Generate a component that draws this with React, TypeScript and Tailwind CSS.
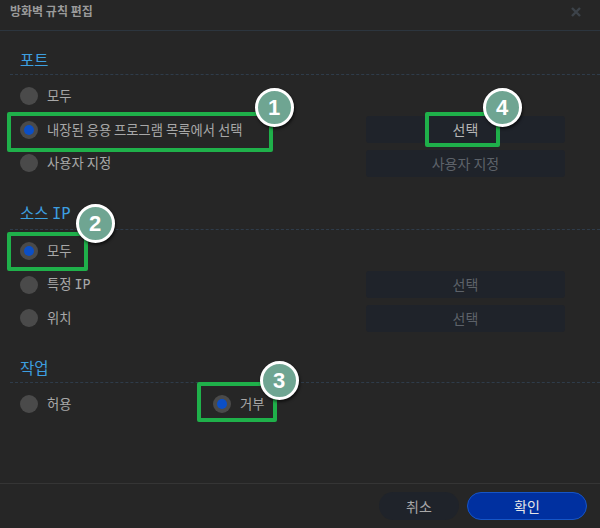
import React from "react";

const ko = { fontFamily: '"Noto Sans CJK KR", "Noto Sans", sans-serif' };
const mono = { fontFamily: '"DejaVu Sans Mono", monospace' };

function Radio({ checked }: { checked?: boolean }) {
  return (
    <span className="w-[18px] h-[18px] rounded-full bg-[#4a4a4a] flex items-center justify-center shrink-0">
      {checked && <span className="w-[10px] h-[10px] rounded-full bg-[#0b4fc6]" />}
    </span>
  );
}

function Row({
  label,
  checked,
  button,
  buttonActive,
}: {
  label: React.ReactNode;
  checked?: boolean;
  button?: string;
  buttonActive?: boolean;
}) {
  return (
    <div className="h-[33.5px] flex items-center pl-[10px]">
      <div className="flex-1 flex items-center gap-[9px]">
        <Radio checked={checked} />
        <span className="text-[13.3px] text-[#a8a8a8]">{label}</span>
      </div>
      {button && (
        <div
          className={`w-[199px] h-[27px] mr-[35px] rounded-[3px] bg-[#1f232a] flex items-center justify-center text-[14px] ${
            buttonActive ? "text-[#b5b5b5]" : "text-[#5d6269]"
          }`}
        >
          {button}
        </div>
      )}
    </div>
  );
}

function Heading({ children, first }: { children: React.ReactNode; first?: boolean }) {
  return (
    <div
      className={`${first ? "mt-[17.5px]" : "mt-[21.5px]"} pl-[10px] pb-[5px] border-b border-dashed border-[#2f3c4a] text-[15.5px] leading-[20px] text-[#3d9fe0]`}
    >
      {children}
    </div>
  );
}

function Badge({ n, x, y }: { n: string; x: number; y: number }) {
  return (
    <div
      className="absolute w-[39px] h-[39px] rounded-full bg-[#6fa592] border-[3px] border-white shadow-[1px_2px_3px_rgba(0,0,0,0.6)] flex items-center justify-center text-white text-[22px] font-bold"
      style={{ left: x - 19.5, top: y - 19.5, fontFamily: '"Liberation Sans", Arial, sans-serif' }}
    >
      {n}
    </div>
  );
}

function Box({ x, y, w, h }: { x: number; y: number; w: number; h: number }) {
  return (
    <div
      className="absolute border-4 border-[#1fb04a] rounded-[2px]"
      style={{ left: x, top: y, width: w, height: h }}
    />
  );
}

export default function App() {
  return (
    <div className="relative w-[600px] h-[528px] bg-[#262626] flex flex-col overflow-hidden" style={ko}>
      {/* header */}
      <div className="h-[31px] border-b border-[#2c353e] flex items-start justify-between pl-[10px] pr-[19px] pt-[3px]">
        <span className="text-[12px] leading-[16px] font-bold text-[#9a9a9a]">방화벽 규칙 편집</span>
        <svg width="10" height="10" viewBox="0 0 10 10" className="mt-[4px]">
          <path d="M1 1 L9 9 M9 1 L1 9" stroke="#3d434a" strokeWidth="2.4" />
        </svg>
      </div>

      {/* body */}
      <div className="flex-1 ml-[10px]">
        <Heading first>포트</Heading>
        <div className="pt-[5px]">
          <Row label="모두" />
          <Row label="내장된 응용 프로그램 목록에서 선택" checked button="선택" buttonActive />
          <Row label="사용자 지정" button="사용자 지정" />
        </div>

        <Heading>
          소스 <span style={mono}>IP</span>
        </Heading>
        <div className="pt-[5px]">
          <Row label="모두" checked />
          <Row
            label={
              <>
                특정 <span style={mono}>IP</span>
              </>
            }
            button="선택"
          />
          <Row label="위치" button="선택" />
        </div>

        <Heading>작업</Heading>
        <div className="pt-[5px]">
          <div className="h-[33.5px] flex items-center pl-[10px]">
            <div className="w-[193px] flex items-center gap-[9px]">
              <Radio />
              <span className="text-[13.3px] text-[#a8a8a8]">허용</span>
            </div>
            <div className="flex items-center gap-[9px]">
              <Radio checked />
              <span className="text-[13.3px] text-[#a8a8a8]">거부</span>
            </div>
          </div>
        </div>
      </div>

      {/* footer */}
      <div className="h-[45px] border-t border-[#353535] flex items-center justify-end gap-[8px] pr-[13px]">
        <button className="w-[80px] h-[28px] rounded-full bg-[#1f232a] text-[14px] text-[#a8a8a8]">취소</button>
        <button className="w-[120px] h-[28px] rounded-full bg-[#0030a0] border border-[#1655c6] text-[14px] text-[#e6e6e6]">
          확인
        </button>
      </div>

      {/* annotations */}
      <Box x={7} y={112} w={266} h={40} />
      <Box x={425} y={112} w={75} h={35} />
      <Box x={7} y={232} w={81} h={39} />
      <Box x={197} y={382} w={80} h={40} />
      <Badge n="1" x={274} y={107} />
      <Badge n="4" x={502} y={107} />
      <Badge n="2" x={95} y={223} />
      <Badge n="3" x={279} y={380} />
    </div>
  );
}
